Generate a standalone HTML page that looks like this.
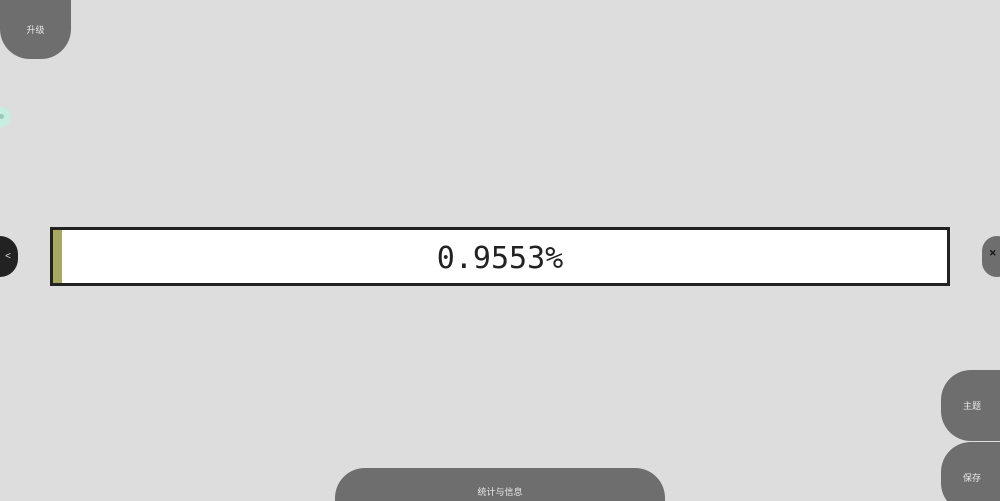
<!DOCTYPE html>
<html><head><meta charset="utf-8"><style>
html,body{margin:0;padding:0;width:1000px;height:501px;overflow:hidden;background:#dddddd;position:relative;font-family:"Liberation Sans","Noto Sans CJK SC",sans-serif}
.b{position:absolute;background:#6e6e6e;color:#e8e8e8;font-size:9px;display:flex;align-items:center;justify-content:center}
</style></head><body>
<div class="b" style="left:0;top:0;width:71px;height:59px;border-radius:0 0 30px 30px">升级</div>
<div style="position:absolute;left:-9px;top:107px;width:20px;height:20px;border-radius:50%;background:#c6eee0"></div>
<div style="position:absolute;left:-1px;top:114px;width:5px;height:5px;border-radius:50%;background:#9bc9b8"></div>
<div style="position:absolute;left:0;top:236px;width:18px;height:41px;background:#222;border-radius:0 20px 20px 0;color:#ddd;font-size:10px;display:flex;align-items:center;justify-content:center;padding-right:2px;box-sizing:border-box">&lt;</div>
<div style="position:absolute;left:982px;top:236px;width:30px;height:41px;background:#6e6e6e;border-radius:20px"></div>
<div style="position:absolute;left:989px;top:248px;color:#111;font-size:9px;font-weight:bold">✕</div>
<div style="position:absolute;left:50px;top:227px;width:894px;height:53px;border:3px solid #222;background:#fff"></div>
<div style="position:absolute;left:53px;top:230px;width:9px;height:53px;background:#a8a860"></div>
<div style="position:absolute;left:50px;top:239px;width:900px;text-align:center;font-family:'DejaVu Sans Mono','Liberation Mono',monospace;font-size:30px;line-height:40px;color:#222">0.9553%</div>
<div class="b" style="left:941px;top:370px;width:70px;height:71px;border-radius:30px 0 0 30px;justify-content:flex-start;padding-left:22px;box-sizing:border-box">主题</div>
<div class="b" style="left:941px;top:442px;width:70px;height:71px;border-radius:30px 0 0 30px;justify-content:flex-start;padding-left:22px;box-sizing:border-box;align-items:flex-start;padding-top:29px">保存</div>
<div class="b" style="left:335px;top:468px;width:330px;height:50px;border-radius:30px 30px 0 0;align-items:flex-start;padding-top:17px;box-sizing:border-box">统计与信息</div>
</body></html>
